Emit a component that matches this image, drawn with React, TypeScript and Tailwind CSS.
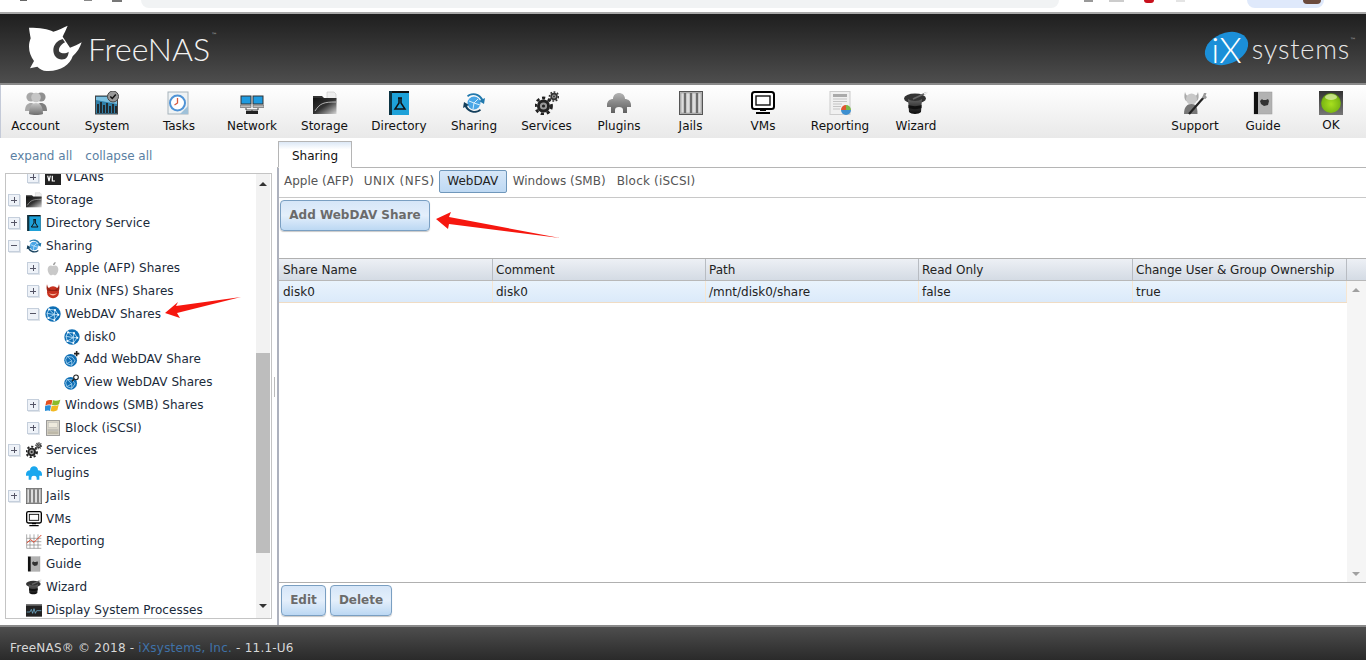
import React from "react";

type P = { s?: number };
const Svg = ({ s = 24, children }: P & { children: React.ReactNode }) => (
  <svg width={s} height={s} viewBox="0 0 24 24" className="shrink-0 block">{children}</svg>
);

const Account = ({ s }: P) => (
  <Svg s={s}>
    <defs><linearGradient id="ga" x1="0" y1="0" x2="0" y2="1"><stop offset="0" stopColor="#c8c8c8" /><stop offset="1" stopColor="#6e6e6e" /></linearGradient></defs>
    <circle cx="7" cy="6" r="4.6" fill="#a8a8a8" /><circle cx="17" cy="6" r="4.6" fill="#8f8f8f" />
    <circle cx="12" cy="6.5" r="4.8" fill="#c6c6c6" />
    <path d="M1 20c0-6 3-8 6-8s4 2 4 8z" fill="#a9a9a9" /><path d="M13 20c0-6 1-8 4-8s6 2 6 8z" fill="#7e7e7e" />
    <path d="M5 23c0-8 3-11 7-11s7 3 7 11c-4 1.300-10 1.300-14 0z" fill="url(#ga)" />
  </Svg>
);
const System = ({ s }: P) => (
  <Svg s={s}>
    <rect x="0.500" y="5" width="22" height="18" fill="#2f7fa8" stroke="#444" />
    <path d="M1 6h21v7L1 9z" fill="#7cc0e0" />
    <path d="M3 22V13M6 22V11M9 22V14M12 22V12M15 22V15M18 22V13M21 22V15" stroke="#222" strokeWidth="1.800" />
    <circle cx="18" cy="5.500" r="5.500" fill="#999" stroke="#444" />
    <path d="M15.300 5.500l2 2 3.500-4" fill="none" stroke="#111" strokeWidth="1.500" />
  </Svg>
);
const Tasks = ({ s }: P) => (
  <Svg s={s}>
    <rect x="1" y="1" width="20" height="22" fill="#eef2f4" stroke="#a7b4bc" />
    <path d="M21 15v8h-8z" fill="#9fc1d9" />
    <circle cx="10.500" cy="12" r="7.500" fill="#fff" stroke="#4f93d6" strokeWidth="2" />
    <path d="M10.500 7v5l-3 2" fill="none" stroke="#d8583e" strokeWidth="1.300" />
  </Svg>
);
const Network = ({ s }: P) => (
  <Svg s={s}>
    <rect x="1" y="5" width="10" height="8" fill="#1f9be0" stroke="#333" /><rect x="13" y="5" width="10" height="8" fill="#1f9be0" stroke="#333" />
    <rect x="0" y="14" width="11" height="2.500" fill="#bbb" stroke="#444" strokeWidth="0.500" /><rect x="13" y="14" width="11" height="2.500" fill="#bbb" stroke="#444" strokeWidth="0.500" />
    <path d="M6 17v2h12v-2M12 19v1" stroke="#444" fill="none" /><rect x="6" y="20" width="12" height="3" fill="#222" />
  </Svg>
);
const Storage = ({ s }: P) => (
  <Svg s={s}>
    <defs><linearGradient id="gs" x1="0" y1="0" x2="1" y2="1"><stop offset="0" stopColor="#111" /><stop offset="0.500" stopColor="#333" /><stop offset="1" stopColor="#d8d8d8" /></linearGradient></defs>
    <path d="M14 1h7l2 2v6h-9z" fill="#eee" stroke="#bbb" strokeWidth="0.500" />
    <path d="M0 5h9l2 2h12v1H0z" fill="#333" />
    <path d="M0 7h23.500v16H0z" fill="url(#gs)" />
    <path d="M2 20c5-8 9-9 21-9" fill="none" stroke="#e8e8e8" strokeWidth="1" opacity="0.700" />
  </Svg>
);
const Directory = ({ s }: P) => (
  <Svg s={s}>
    <rect x="2" y="0" width="20" height="24" fill="#111" />
    <rect x="4" y="2" width="18" height="22" fill="#1ea1d8" />
    <rect x="2" y="0" width="3" height="24" fill="#0c3444" />
    <path d="M11 7h4M12 7v5l-4 6h10l-4-6V7" fill="none" stroke="#111" strokeWidth="1.500" />
  </Svg>
);
const Sharing = ({ s }: P) => (
  <Svg s={s}>
    <circle cx="12" cy="12" r="6.500" fill="#49a6e6" />
    <path d="M7 10l5 2 4-4M12 12l-1 6M12 12l6 2" stroke="#d6eefc" strokeWidth="1" fill="none" />
    <path d="M5 4.500A10.500 10.500 0 0 1 21 8l2-1-1 6-5-3 2-1A8.500 8.500 0 0 0 6 6z" fill="#2279ad" />
    <path d="M19 19.500A10.500 10.500 0 0 1 3 16l-2 1 1-6 5 3-2 1A8.500 8.500 0 0 0 18 18z" fill="#143f5c" />
  </Svg>
);
const Gear = ({ x, y, r, c }: { x: number; y: number; r: number; c: string }) => (
  <g>
    <circle cx={x} cy={y} r={r} fill="none" stroke={c} strokeWidth={r * 0.35} strokeDasharray={`${r * 0.4} ${r * 0.35}`} />
    <circle cx={x} cy={y} r={r * 0.82} fill={c} />
    <circle cx={x} cy={y} r={r * 0.45} fill="#999" />
    <circle cx={x} cy={y} r={r * 0.2} fill={c} />
  </g>
);
const Services = ({ s }: P) => (
  <Svg s={s}>
    <Gear x={8.500} y={15} r={8} c="#222" />
    <Gear x={19} y={5.500} r={4.500} c="#333" />
  </Svg>
);
const pluginPath = "M6 8C6 4 9 2 12 2s6 2 6 6c3 0 6 2 6 6v2h-4v6h-4v-3a4 3 0 0 0-8 0v3H4v-6H0v-2c0-4 3-6 6-6z";
const Plugins = ({ s }: P) => (
  <Svg s={s}>
    <defs><linearGradient id="gp" x1="0" y1="0" x2="0" y2="1"><stop offset="0" stopColor="#b5b5b5" /><stop offset="0.450" stopColor="#8a8a8a" /><stop offset="1" stopColor="#5f5f5f" /></linearGradient></defs>
    <path d={pluginPath} fill="url(#gp)" />
  </Svg>
);
const PluginsBlue = ({ s }: P) => (
  <Svg s={s}><path d={pluginPath} fill="#1aa7ee" /></Svg>
);
const Jails = ({ s }: P) => (
  <Svg s={s}>
    <rect x="0.500" y="0.500" width="23" height="23" fill="#b9b9b9" stroke="#555" />
    <rect x="2" y="2" width="20" height="20" fill="#ddd" stroke="#888" strokeWidth="0.500" />
    <path d="M6 2v20M12 2v20M18 2v20" stroke="#6d6d6d" strokeWidth="2.400" />
  </Svg>
);
const VMs = ({ s }: P) => (
  <Svg s={s}>
    <rect x="1" y="1" width="22" height="17" rx="2.500" fill="#fff" stroke="#000" strokeWidth="2" />
    <rect x="5" y="5" width="14" height="9" fill="#fff" stroke="#111" strokeWidth="1.400" />
    <path d="M9 18h6v2H9zM5 21h14v2H5z" fill="#000" />
  </Svg>
);
const Reporting = ({ s }: P) => (
  <Svg s={s}>
    <rect x="2" y="0.500" width="20" height="23" fill="#f0f0f0" stroke="#ccc" />
    <path d="M5 3h14v3H5z" fill="#aaa" />
    <path d="M5 8h14M5 10.500h14M5 13h9M5 15.500h8M5 18h7" stroke="#c4c4c4" strokeWidth="1" />
    <path d="M18 19v-5a5 5 0 0 0-5 5z" fill="#e0552f" /><path d="M18 14a5 5 0 0 1 5 5h-5z" fill="#7ab648" /><path d="M13 19a5 5 0 0 0 10 0z" fill="#3d8fd0" />
  </Svg>
);
const ReportChart = ({ s }: P) => (
  <Svg s={s}>
    <path d="M1 2v21h22M1 8h22M1 13h22M1 18h22M6 2v21M12 2v21M18 2v21" fill="none" stroke="#777" strokeWidth="0.900" />
    <path d="M1 15l6-5 5 4 11-11" fill="none" stroke="#e0482e" strokeWidth="1.500" />
  </Svg>
);
const Wizard = ({ s }: P) => (
  <Svg s={s}>
    <defs><linearGradient id="gw" x1="0" y1="0" x2="0" y2="1"><stop offset="0" stopColor="#666" /><stop offset="1" stopColor="#0a0a0a" /></linearGradient></defs>
    <ellipse cx="11" cy="7.500" rx="11" ry="5" fill="#333" />
    <path d="M4 8c3 2.500 11 2.500 14 0l-1 13c-2 2.500-10 2.500-12 0z" fill="url(#gw)" />
    <path d="M4.500 14c3 1.500 10 1.500 13 0v3c-3 1.500-10 1.500-13 0z" fill="#111" />
    <path d="M9 8l13-6" stroke="#666" strokeWidth="1.800" /><path d="M20 3l3.500-1.800" stroke="#eee" strokeWidth="1.800" />
  </Svg>
);
const Support = ({ s }: P) => (
  <Svg s={s}>
    <path d="M2 1c1 3 2 4 3 4h7c1 0 2-1 3-4 1 4 1 7-1 9H3C1 8 1 5 2 1z" fill="#aaa" />
    <circle cx="8.500" cy="8" r="5.500" fill="#c8c8c8" />
    <path d="M1 23c0-7 3-10 7.500-10s6 3 6 10z" fill="#777" />
    <path d="M6 23L22 5" stroke="#222" strokeWidth="2.200" />
    <path d="M19 7l2-5 2.500 0-1 3 1.500 1-1.500 2z" fill="#999" />
  </Svg>
);
const Guide = ({ s }: P) => (
  <Svg s={s}>
    <rect x="3" y="1" width="18" height="22" fill="#b2b2b2" stroke="#999" strokeWidth="0.500" />
    <rect x="3" y="1" width="4" height="22" fill="#111" />
    <path d="M9 10l2-2 1 1h3l2-1 1 2-1 4-4 1-3-2z" fill="#333" />
  </Svg>
);
const Ok = ({ s }: P) => (
  <Svg s={s}>
    <defs><radialGradient id="go" cx="0.500" cy="0.550" r="0.600"><stop offset="0" stopColor="#a8e01e" /><stop offset="0.750" stopColor="#7cb814" /><stop offset="1" stopColor="#3c6a10" /></radialGradient>
      <linearGradient id="gob" x1="0" y1="0" x2="0" y2="1"><stop offset="0" stopColor="#333" /><stop offset="1" stopColor="#777" /></linearGradient></defs>
    <rect x="0" y="0" width="24" height="24" fill="url(#gob)" />
    <circle cx="12" cy="12" r="10" fill="url(#go)" />
    <ellipse cx="12" cy="6" rx="6" ry="3" fill="#e0f0b0" opacity="0.700" />
  </Svg>
);
const Vlan = ({ s }: P) => (
  <Svg s={s}><rect x="0" y="2" width="24" height="22" fill="#222" /><path d="M0 2h8l2 3H0z" fill="#666" /><path d="M4 10l2 8 2-8M11 10v8h4" fill="none" stroke="#fff" strokeWidth="1.800" /></Svg>
);
const Apple = ({ s }: P) => (
  <Svg s={s}>
    <path d="M12 9c3-2 8-1 8 5 0 5-3 9-5 9-1.500 0-2-1-3-1s-1.500 1-3 1c-2 0-5-4-5-9 0-6 5-7 8-5z" fill="#c9c9c9" />
    <path d="M12 8c0-3 2-5 4-5 0 3-2 5-4 5z" fill="#999" />
  </Svg>
);
const Daemon = ({ s }: P) => (
  <Svg s={s}>
    <circle cx="12" cy="14" r="9" fill="#c8321f" />
    <path d="M3 2c1 5 3 7 6 7l-5 4C2 10 2 6 3 2zM21 2c-1 5-3 7-6 7l5 4c2-3 2-7 1-11z" fill="#a02416" />
    <path d="M6 15c2 5 10 5 12 0-2 2-10 2-12 0z" fill="#f6b7a0" />
    <path d="M6 11h12" stroke="#6a1208" strokeWidth="1" />
  </Svg>
);
const Globe = ({ s }: P) => (
  <Svg s={s}>
    <circle cx="12" cy="12" r="11.500" fill="#0f6fb5" />
    <path d="M6 5l9 1 5 7-6 8-9-3-2-7zM6 5l8 8M15 6l-1 7M20 13h-6M14 13l0 8M14 13L5 18M14 13L3 11" fill="none" stroke="#bfe2f8" strokeWidth="1.300" />
    <circle cx="6" cy="5" r="1.500" fill="#fff" /><circle cx="15" cy="6" r="1.500" fill="#fff" /><circle cx="20" cy="13" r="1.500" fill="#fff" /><circle cx="14" cy="21" r="1.500" fill="#fff" /><circle cx="5" cy="18" r="1.500" fill="#fff" />
  </Svg>
);
const GlobeAdd = ({ s }: P) => (
  <Svg s={s}>
    <g transform="translate(0 4) scale(0.830)">
      <circle cx="12" cy="12" r="11.500" fill="#0f6fb5" />
      <path d="M6 5l9 1 5 7-6 8-9-3-2-7zM6 5l8 8M14 13l0 8M14 13L5 18" fill="none" stroke="#bfe2f8" strokeWidth="1.300" />
    </g>
    <path d="M19 0v8M15 4h8" stroke="#222" strokeWidth="2.400" />
  </Svg>
);
const GlobeView = ({ s }: P) => (
  <Svg s={s}>
    <g transform="translate(0 4) scale(0.830)">
      <circle cx="12" cy="12" r="11.500" fill="#0f6fb5" />
      <path d="M6 5l9 1 5 7-6 8-9-3-2-7zM6 5l8 8M14 13l0 8M14 13L5 18" fill="none" stroke="#bfe2f8" strokeWidth="1.300" />
    </g>
    <circle cx="18" cy="5" r="3.500" fill="#fff" stroke="#222" strokeWidth="1.600" /><path d="M15 8l-3 3" stroke="#222" strokeWidth="2" />
  </Svg>
);
const Windows = ({ s }: P) => (
  <Svg s={s}>
    <path d="M2 6c3-2 6-2 9-1l-1.500 7c-3-1-6-1-9 1z" fill="#e2501f" />
    <path d="M12 5c3 1 7 1 11-1l-2 7c-3 2-7 2-10.500 1z" fill="#8abb2c" />
    <path d="M0 14c3-2 6-2 9-1l-1.500 8c-3-1-6-1-9 1z" fill="#2a8fd8" />
    <path d="M10 13c3 1 7 1 10.500-1l-2 8c-3 2-7 2-10 1z" fill="#f2b821" />
  </Svg>
);
const Block = ({ s }: P) => (
  <Svg s={s}>
    <rect x="2" y="1" width="20" height="22" fill="#d8d4c8" stroke="#777" />
    <rect x="5" y="4" width="14" height="7" fill="#eeeadd" stroke="#aaa" strokeWidth="0.500" />
    <path d="M4 15h16" stroke="#999" /><rect x="4" y="17" width="16" height="4" fill="#bdb8a8" />
  </Svg>
);
const Processes = ({ s }: P) => (
  <Svg s={s}>
    <rect x="0" y="3" width="24" height="19" fill="#222" /><rect x="0" y="3" width="24" height="2.500" fill="#777" />
    <path d="M1 15h5l2-4 2 6 2-7 2 7 2-4h7" fill="none" stroke="#7fc6e8" strokeWidth="1" />
  </Svg>
);

const Shark = () => (
  <svg width="56" height="47" viewBox="24 20 168 141" className="block shrink-0">
    <path fill="#fff" d="M27 28C60 28 85 32 100 40C115 35 130 28 143 22C138 35 132 45 128 55L150 88C162 84 175 78 185 72C180 88 172 102 158 114C150 140 120 160 80 158C68 158 60 152 52 145L30 150L42 128C28 110 22 85 32 60C30 48 28 38 27 28Z" />
    <path fill="#3a3a3a" d="M128 62C112 66 100 80 100 95C100 115 115 128 135 122C142 118 146 108 146 100C138 105 128 108 118 100C114 92 120 80 135 72Z" />
  </svg>
);

const IxLogo = () => (
  <div className="flex items-center shrink-0">
    <div className="w-[45px] h-[31px] -rotate-[22deg] rounded-[50%] bg-[#1b8fd8] flex items-center justify-center overflow-visible">
      <span className="rotate-[22deg] text-white text-[36px] font-light leading-none font-['Lato','Open_Sans',sans-serif]">iX</span>
    </div>
    <span className="ml-[3px] text-[#e8e8e8] text-[27px] font-light leading-none tracking-[0.8px] font-['Lato','Open_Sans',sans-serif]">systems</span>
    <span className="self-start mt-[4px] text-[6px] leading-none text-[#bbb]">™</span>
  </div>
);

type T = { l: string; w: string; m?: string; I: React.FC<P> };

const tools: T[] = [
  { l: "Account", w: "w-[71px]", I: Account },
  { l: "System", w: "w-[72px]", I: System },
  { l: "Tasks", w: "w-[72px]", I: Tasks },
  { l: "Network", w: "w-[74px]", I: Network },
  { l: "Storage", w: "w-[71px]", I: Storage },
  { l: "Directory", w: "w-[78px]", I: Directory },
  { l: "Sharing", w: "w-[72px]", I: Sharing },
  { l: "Services", w: "w-[73px]", I: Services },
  { l: "Plugins", w: "w-[72px]", I: Plugins },
  { l: "Jails", w: "w-[71px]", I: Jails },
  { l: "VMs", w: "w-[74px]", I: VMs },
  { l: "Reporting", w: "w-[80px]", I: Reporting },
  { l: "Wizard", w: "w-[72px]", I: Wizard },
];

const rightTools: T[] = [
  { l: "Support", w: "w-[68px]", I: Support },
  { l: "Guide", w: "w-[68px]", I: Guide },
  { l: "OK", w: "w-[68px]", m: "mt-[3px]", I: Ok },
];

const Tool = ({ l, w, m, I }: T) => (
  <div className={`${w} shrink-0 flex flex-col items-center`}>
    <div className="h-[24px] flex items-center justify-center"><I s={24} /></div>
    <span className={`${m ?? "mt-[4px]"} text-[12px] leading-[15px] text-[#111] whitespace-nowrap`}>{l}</span>
  </div>
);

const Expander = ({ open }: { open?: boolean }) => (
  <div className="w-[12px] h-[12px] shrink-0 border border-[#c5cfdc] bg-[#eef2f8] shadow-[1px_1px_0_#dfe4ea] flex items-center justify-center">
    <span className="relative block w-[6px] h-[6px]">
      <span className="absolute left-0 top-[2.500px] w-[6px] h-[1px] bg-[#556]" />
      {!open && <span className="absolute top-0 left-[2.500px] h-[6px] w-[1px] bg-[#556]" />}
    </span>
  </div>
);

const tree: { t: string; d: string; e?: "+" | "-"; I: React.FC<P> }[] = [
  { t: "VLANs", d: "pl-[21px]", e: "+", I: Vlan },
  { t: "Storage", d: "pl-[2px]", e: "+", I: Storage },
  { t: "Directory Service", d: "pl-[2px]", e: "+", I: Directory },
  { t: "Sharing", d: "pl-[2px]", e: "-", I: Sharing },
  { t: "Apple (AFP) Shares", d: "pl-[21px]", e: "+", I: Apple },
  { t: "Unix (NFS) Shares", d: "pl-[21px]", e: "+", I: Daemon },
  { t: "WebDAV Shares", d: "pl-[21px]", e: "-", I: Globe },
  { t: "disk0", d: "pl-[40px]", I: Globe },
  { t: "Add WebDAV Share", d: "pl-[40px]", I: GlobeAdd },
  { t: "View WebDAV Shares", d: "pl-[40px]", I: GlobeView },
  { t: "Windows (SMB) Shares", d: "pl-[21px]", e: "+", I: Windows },
  { t: "Block (iSCSI)", d: "pl-[21px]", e: "+", I: Block },
  { t: "Services", d: "pl-[2px]", e: "+", I: Services },
  { t: "Plugins", d: "pl-[2px]", I: PluginsBlue },
  { t: "Jails", d: "pl-[2px]", e: "+", I: Jails },
  { t: "VMs", d: "pl-[2px]", I: VMs },
  { t: "Reporting", d: "pl-[2px]", I: ReportChart },
  { t: "Guide", d: "pl-[2px]", I: Guide },
  { t: "Wizard", d: "pl-[2px]", I: Wizard },
  { t: "Display System Processes", d: "pl-[2px]", I: Processes },
];

const Btn = ({ children, w }: { children: React.ReactNode; w: string }) => (
  <div className={`${w} h-[31px] pb-[2px] rounded-[4px] border border-[#7a9fc2] bg-gradient-to-b from-[#d6e6f8] via-[#e4effb] to-[#bcd8f3] shadow-[0_1px_1px_#c8c8c8] flex items-center justify-center font-bold text-[12px] text-[#6b6b6b] whitespace-nowrap`}>
    {children}
  </div>
);

const cols = ["Share Name", "Comment", "Path", "Read Only", "Change User & Group Ownership"];
const vals = ["disk0", "disk0", "/mnt/disk0/share", "false", "true"];
const colW = ["w-[214px] pl-[4px]", "w-[213px] pl-[3px]", "w-[213px] pl-[3px]", "w-[214px] pl-[3px]", "w-[214px] pl-[3px]"];

export default function App() {
  return (
    <div className="relative w-[1366px] h-[660px] overflow-hidden bg-white flex flex-col font-['DejaVu_Sans','Liberation_Sans',sans-serif] text-[12px] text-[#222]">
      {/* browser strip */}
      <div className="h-[12px] shrink-0 bg-white flex items-start">
        <div className="ml-[20px] w-[7px] h-[1px] bg-[#666]" />
        <div className="ml-[57px] w-[8px] h-[1px] bg-[#888]" />
        <div className="ml-[20px] w-[10px] h-[2px] bg-[#777]" />
        <div className="ml-[19px] w-[918px] h-[8px] rounded-b-[10px] bg-[#f1f3f4]" />
        <div className="ml-[25px] w-[9px] h-[2px] bg-[#999]" />
        <div className="ml-[16px] w-[15px] h-[2px] bg-[#ccc]" />
        <div className="ml-[20px] w-[10px] h-[3px] rounded-b-full bg-[#c8101c]" />
        <div className="ml-[22px] w-[9px] h-[2px] bg-[#e4e4e4]" />
        <div className="ml-[62px] w-[77px] h-[8px] rounded-b-[10px] bg-[#dfe9fb] flex justify-end pr-[3px]">
          <div className="w-[18px] h-[4px] rounded-b-full bg-[#6b4a3c]" />
        </div>
      </div>
      {/* header */}
      <div className="h-[73px] shrink-0 border-t-2 border-t-[#a8a8a8] border-b-2 border-b-[#8a8a8a] bg-gradient-to-b from-[#1f1f1f] to-[#4e4e4e] flex items-center justify-between pl-[28px] pr-[10px]">
        <div className="flex items-center">
          <Shark />
          <span className="ml-[4px] text-[#f2f2f2] text-[32px] font-light leading-none tracking-[0px] font-['Lato','Open_Sans',sans-serif]">FreeNAS</span>
          <span className="self-start ml-[1px] mt-[7px] text-[6px] leading-none text-[#bbb]">™</span>
        </div>
        <IxLogo />
      </div>
      {/* toolbar */}
      <div className="h-[53px] shrink-0 border-l border-[#c4cad8] bg-gradient-to-b from-[#ffffff] to-[#e9e9e9] flex items-start justify-between pt-[6px] pr-[1px]">
        <div className="flex -ml-[1px]">{tools.map((t) => <Tool key={t.l} {...t} />)}</div>
        <div className="flex">{rightTools.map((t) => <Tool key={t.l} {...t} />)}</div>
      </div>
      {/* body */}
      <div className="flex-1 min-h-0 flex">
        {/* sidebar */}
        <div className="w-[272px] shrink-0 flex flex-col pl-[5px]">
          <div className="h-[35px] shrink-0 flex items-center pl-[5px] gap-[13px] text-[#5b7fa3]">
            <span>expand all</span><span>collapse all</span>
          </div>
          <div className="w-[267px] h-[446px] border border-[#c4c4c4] flex bg-white overflow-hidden">
            <div className="flex-1 min-w-0 overflow-hidden">
              <div className="-mt-[8px]">
                {tree.map((r) => (
                  <div key={r.t} className={`${r.d} h-[22.750px] flex items-center whitespace-nowrap text-[#1a2a3a] tracking-[0.04px]`}>
                    {r.e ? <Expander open={r.e === "-"} /> : <div className="w-[12px] shrink-0" />}
                    <div className="ml-[6px] w-[16px] shrink-0"><r.I s={16} /></div>
                    <span className="ml-[4px]">{r.t}</span>
                  </div>
                ))}
              </div>
            </div>
            <div className="w-[14px] mr-[1px] shrink-0 bg-[#f2f2f2] flex flex-col items-center">
              <div className="mt-[8px] w-0 h-0 border-x-[4px] border-x-transparent border-b-[4px] border-b-[#333]" />
              <div className="mt-[167px] w-[14px] h-[200px] bg-[#bdbdbd]" />
              <div className="mt-[51px] w-0 h-0 border-x-[4px] border-x-transparent border-t-[4px] border-t-[#333]" />
            </div>
          </div>
        </div>
        {/* splitter */}
        <div className="w-[5px] shrink-0 flex items-center justify-center">
          <div className="mt-[11px] w-[1px] h-[20px] bg-[#bbbbbb]" />
        </div>
        {/* main */}
        <div className="flex-1 min-w-0 flex flex-col">
          <div className="h-[30px] shrink-0 flex items-end border-b border-[#b5b5b5] pl-[1px]">
            <div className="w-[74px] h-[27px] -mb-[1px] pt-[2px] border border-[#b5b5b5] border-b-white bg-gradient-to-b from-[#dce8f6] to-white to-30% flex items-center justify-center text-[#111]">Sharing</div>
          </div>
          <div className="flex-1 min-h-0 border-l-2 border-[#adb1bd] flex flex-col">
            <div className="h-[30px] shrink-0 pb-[3px] border-b border-[#c8c8c8] flex items-center pl-[5px] text-[#555]">
              <span>Apple (AFP)</span>
              <span className="ml-[10px] tracking-[0.5px]">UNIX (NFS)</span>
              <span className="ml-[4px] h-[23px] w-[68px] rounded-[2px] border border-[#6f97bb] bg-gradient-to-b from-[#d7e7f8] to-[#bed9f3] flex items-center justify-center text-[#222]">WebDAV</span>
              <span className="ml-[6px]">Windows (SMB)</span>
              <span className="ml-[11px] tracking-[0.2px]">Block (iSCSI)</span>
            </div>
            <div className="pl-[1px] pt-[2px]">
              <Btn w="w-[150px]">Add WebDAV Share</Btn>
            </div>
            <div className="h-[27px] shrink-0" />
            <div className="h-[325px] shrink-0 border-y border-[#b0b0b0] flex flex-col">
              <div className="h-[22px] shrink-0 flex border-b border-[#b8b8b8] bg-gradient-to-b from-[#edf0f5] to-[#d4dbe4]">
                {cols.map((c, i) => (
                  <div key={c} className={`${colW[i]} shrink-0 border-r border-[#b8bcc2] flex items-center text-[#222] whitespace-nowrap`}>{c}</div>
                ))}
              </div>
              <div className="flex-1 min-h-0 flex">
                <div className="flex-1 min-w-0">
                  <div className="h-[22px] flex border-b border-[#f0dcc4] bg-gradient-to-b from-[#e9f3fc] to-[#dbeafa]">
                    {vals.map((v, i) => (
                      <div key={i} className={`${colW[i]} shrink-0 border-r border-[#f5e6d2] flex items-center text-[#222]`}>{v}</div>
                    ))}
                  </div>
                </div>
                <div className="w-[19px] shrink-0 bg-[#f5f5f5] flex flex-col items-center pr-[2px]">
                  <div className="mt-[7px] w-0 h-0 border-x-[4px] border-x-transparent border-b-[4px] border-b-[#a0a0a0]" />
                  <div className="mt-auto mb-[6px] w-0 h-0 border-x-[4px] border-x-transparent border-t-[4px] border-t-[#a0a0a0]" />
                </div>
              </div>
            </div>
            <div className="pl-[2px] pt-[2px] flex gap-[4px]">
              <Btn w="w-[45px]">Edit</Btn>
              <Btn w="w-[62px]">Delete</Btn>
            </div>
          </div>
        </div>
      </div>
      {/* footer */}
      <div className="h-[35px] shrink-0 pt-[9px] border-t-2 border-t-[#8a8a8a] bg-gradient-to-b from-[#4e4e4e] to-[#2a2a2a] flex items-center pl-[10px] text-[#d8d8d8] tracking-[0.22px]">
        <span>FreeNAS® © 2018 - <span className="text-[#3f72a8]">iXsystems, Inc.</span> - 11.1-U6</span>
      </div>
      {/* annotation arrows over the page */}
      <svg className="absolute left-0 top-0 pointer-events-none" width="1366" height="660">
        <polygon fill="#f6170f" points="436,219 451,212 449,217 560,238 449,224 448,229" />
        <polygon fill="#f6170f" points="165,313 178,302 176,306 241,297 177,313 180,318" />
      </svg>
    </div>
  );
}
